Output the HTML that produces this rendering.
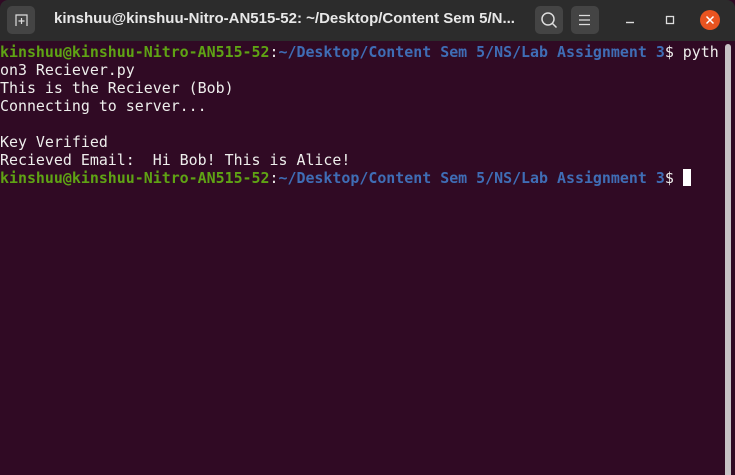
<!DOCTYPE html>
<html><head><meta charset="utf-8"><style>
html,body{margin:0;padding:0;width:735px;height:475px;overflow:hidden;background:#300a24;}
.tb{position:absolute;left:0;top:0;width:735px;height:41px;background:#2c2c2c;border-radius:8px 8px 0 0;}
.btn{position:absolute;top:6px;width:28px;height:28px;background:#444;border-radius:5px;}
.title{position:absolute;left:54px;top:10px;color:#e8e8e8;font:bold 15px "Liberation Sans",sans-serif;}
.term{position:absolute;left:0;top:43px;font-family:"DejaVu Sans Mono",monospace;font-size:14.93px;line-height:18px;color:#eeeeec;white-space:pre;}
.g{color:#5fa314;font-weight:bold}.b{color:#3f6db5;font-weight:bold}
.cur{display:inline-block;width:8px;height:17px;background:#fff;vertical-align:-3px}
.sb{position:absolute;left:725px;top:44px;width:6px;height:431px;background:#c7c3c5;border-radius:3px 3px 0 0;}
</style></head><body>
<div class="tb">
 <div class="btn" style="left:7px"><svg width="28" height="28"><path d="M9 20V9h11v11" fill="none" stroke="#ddd" stroke-width="1.2"/><path d="M14.5 12v6M11.5 15h6" stroke="#ddd" stroke-width="1.2"/></svg></div>
 <div class="title">kinshuu@kinshuu-Nitro-AN515-52: ~/Desktop/Content Sem 5/N...</div>
 <div class="btn" style="left:535px"><svg width="28" height="28"><circle cx="13" cy="13" r="6" fill="none" stroke="#ddd" stroke-width="1.5"/><path d="M17.5 17.5l4 4" stroke="#ddd" stroke-width="1.5"/></svg></div>
 <div class="btn" style="left:571px"><svg width="28" height="28"><path d="M8 9.5h11M8 14h11M8 18.5h11" stroke="#ddd" stroke-width="1.3"/></svg></div>
 <svg style="position:absolute;left:620px;top:8px" width="110" height="26"><path d="M6 14.5h8" stroke="#ddd" stroke-width="1.4"/><rect x="46.5" y="8.5" width="7" height="7" fill="none" stroke="#ddd" stroke-width="1.3"/><circle cx="90" cy="12" r="10" fill="#e95420"/><path d="M86.5 8.5l7 7M93.5 8.5l-7 7" stroke="#fff" stroke-width="1.5"/></svg>
</div>
<div class="term"><span class="g">kinshuu@kinshuu-Nitro-AN515-52</span>:<span class="b">~/Desktop/Content Sem 5/NS/Lab Assignment 3</span>$ pyth
on3 Reciever.py
This is the Reciever (Bob)
Connecting to server...

Key Verified
Recieved Email:  Hi Bob! This is Alice!
<span class="g">kinshuu@kinshuu-Nitro-AN515-52</span>:<span class="b">~/Desktop/Content Sem 5/NS/Lab Assignment 3</span>$ <span class="cur"></span></div>
<div class="sb"></div>
</body></html>
